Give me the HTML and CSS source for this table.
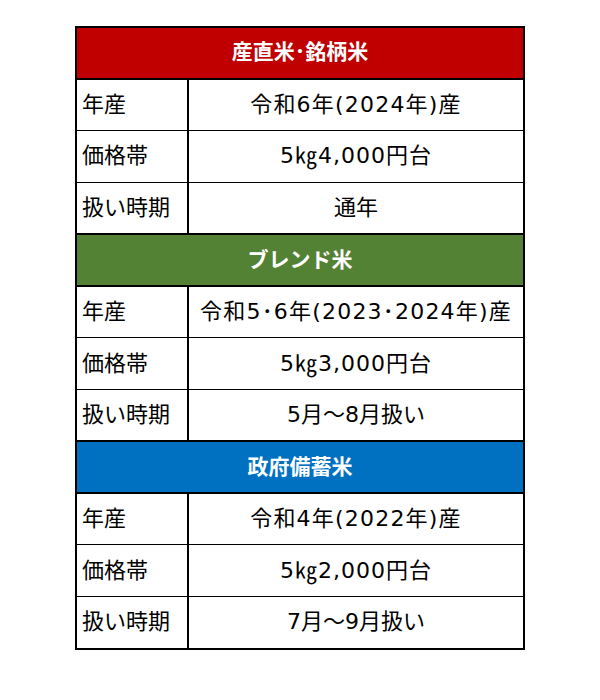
FILE: index.html
```html
<!DOCTYPE html>
<html lang="ja">
<head>
<meta charset="utf-8">
<link rel="stylesheet" href="styles.css">
</head>
<body>
<table class="rice">
  <tr class="head red"><th colspan="2">産直米･銘柄米</th></tr>
  <tr><td class="label">年産</td><td class="val year">令和6年(2024年)産</td></tr>
  <tr><td class="label">価格帯</td><td class="val price">5㎏4,000円台</td></tr>
  <tr><td class="label">扱い時期</td><td class="val">通年</td></tr>
  <tr class="head green"><th colspan="2">ブレンド米</th></tr>
  <tr><td class="label">年産</td><td class="val year">令和5･6年(2023･2024年)産</td></tr>
  <tr><td class="label">価格帯</td><td class="val price">5㎏3,000円台</td></tr>
  <tr><td class="label">扱い時期</td><td class="val">5月～8月扱い</td></tr>
  <tr class="head blue"><th colspan="2">政府備蓄米</th></tr>
  <tr><td class="label">年産</td><td class="val year">令和4年(2022年)産</td></tr>
  <tr><td class="label">価格帯</td><td class="val price">5㎏2,000円台</td></tr>
  <tr><td class="label">扱い時期</td><td class="val">7月～9月扱い</td></tr>
</table>
</body>
</html>
```
FILE: styles.css
```css
html, body {
  margin: 0;
  padding: 0;
  background: #fff;
}
body {
  font-family: "DejaVu Sans", "Noto Sans CJK JP", sans-serif;
  color: #000;
}
.rice {
  margin: 26px 0 0 75px;
  width: 450px;
  border-collapse: collapse;
  border: 2px solid #000;
  font-size: 22px;
  line-height: 1;
}
.rice tr {
  height: 51.8px;
}
.rice td, .rice th {
  padding: 0;
  border: 1px solid #000;
}
.rice th {
  color: #fff;
  font-weight: bold;
  font-size: 21px;
  text-align: center;
  border-top: 2px solid #000;
  border-bottom: 2px solid #000;
}
.red th { background: #c00000; }
.green th { background: #548235; }
.blue th { background: #0070c0; }
.rice .label {
  width: 105px;
  padding-left: 5px;
  text-align: left;
  border-right: 2px solid #000;
}
.rice .val {
  text-align: center;
}
.rice .year {
  letter-spacing: 1.2px;
}
.rice .price {
  letter-spacing: 1px;
}
```
